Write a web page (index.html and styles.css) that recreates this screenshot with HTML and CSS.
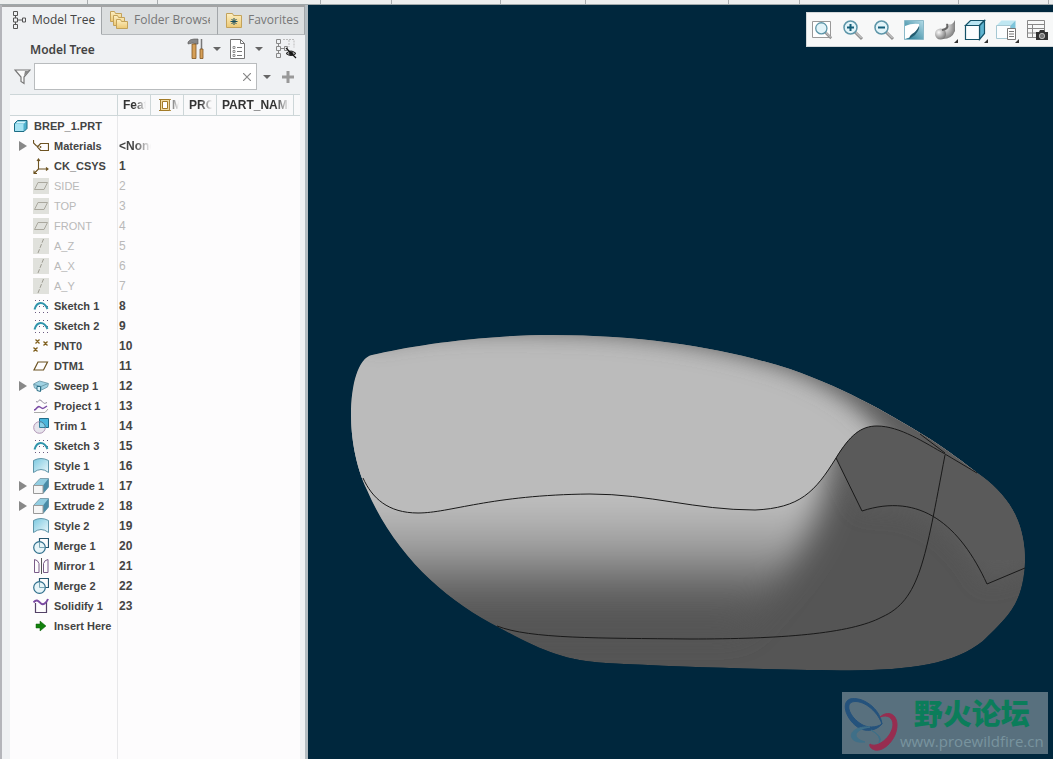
FILE: index.html
```
<!DOCTYPE html>
<html lang="en">
<head>
    <meta charset="UTF-8">
    <meta name="viewport" content="width=device-width, initial-scale=1.0">
    <title>BREP_1.PRT</title>
    <link rel="stylesheet" href="styles.css">
</head>
<body>
    <!-- Shared icon shapes -->
    <svg class="defs" aria-hidden="true">
        <defs>
            <linearGradient id="blue" x1="0" y1="0" x2="1" y2="1">
                <stop offset="0" stop-color="#7cc9e0"/>
                <stop offset="1" stop-color="#eaf7fb"/>
            </linearGradient>
            <linearGradient id="folder" x1="0" y1="0" x2="0" y2="1">
                <stop offset="0" stop-color="#fdf0c4"/>
                <stop offset="1" stop-color="#ecc873"/>
            </linearGradient>
            <linearGradient id="teal" x1="0" y1="1" x2="1" y2="0">
                <stop offset="0" stop-color="#1e7791"/>
                <stop offset="1" stop-color="#b5dce8"/>
            </linearGradient>
            <radialGradient id="ball" cx="0.35" cy="0.35" r="0.7">
                <stop offset="0" stop-color="#fafafa"/>
                <stop offset="1" stop-color="#777"/>
            </radialGradient>
        </defs>
        <symbol id="i-part" viewBox="0 0 16 16">
            <path d="M1.500 5.500l3-3h9.500v8l-3 3H1.500z" fill="#4fb0cc" stroke="#1d6c84"/>
            <path d="M2 6h8.500v7H2z" fill="#a5e3f3"/>
            <path d="M2.500 5.500l2-2H13l-2 2z" fill="#d6f4fb"/>
        </symbol>
        <symbol id="i-material" viewBox="0 0 16 16">
            <path d="M.5 2v3l3 3h2M4.500 9l3-3.500h8v7h-8z" fill="none" stroke="#6d5322" stroke-width="1.200"/>
            <circle cx="7.500" cy="9" r="0.900" fill="#6d5322"/>
        </symbol>
        <symbol id="i-csys" viewBox="0 0 16 16">
            <path d="M5.500 1v10H15M5.500 11L1 15.500M4 3l1.500-2L7 3M13 9.500l2 1.500-2 1.500M1 12.500v3h3" fill="none" stroke="#6d5322" stroke-width="1.100"/>
        </symbol>
        <symbol id="i-plane-off" viewBox="0 0 16 16">
            <path d="M0 0h16v16H0z" fill="#e0e1dc"/>
            <path d="M5 4.500h9.500l-3.500 7H1.500z" fill="none" stroke="#aaa89e"/>
        </symbol>
        <symbol id="i-axis-off" viewBox="0 0 16 16">
            <path d="M0 0h16v16H0z" fill="#e0e1dc"/>
            <path d="M10.500 1L5 15" fill="none" stroke="#9e9c92" stroke-dasharray="4 1.500"/>
        </symbol>
        <symbol id="i-sketch" viewBox="0 0 16 16">
            <path d="M2 2.500h14M2 8.500h14M2 14.500h14" stroke="#6a5a80" stroke-dasharray="1 3"/>
            <path d="M1.500 11.500C4 3 11 3 14.500 11" fill="none" stroke="#2e93ab" stroke-width="2"/>
        </symbol>
        <symbol id="i-point" viewBox="0 0 16 16">
            <path d="M2.500 1.500l4 4m0-4l-4 4M10.500 3.500l4 4m0-4l-4 4M.5 9.500l4 4m0-4l-4 4" stroke="#80601f" stroke-width="1.300"/>
        </symbol>
        <symbol id="i-plane" viewBox="0 0 16 16">
            <path d="M5 4h9.500l-4 8H1z" fill="none" stroke="#6d5322" stroke-width="1.200"/>
        </symbol>
        <symbol id="i-sweep" viewBox="0 0 16 16">
            <path d="M0.500 6l6-3 9 2.500-1 3.500-6 3-7-2z" fill="#9fd2e3" stroke="#7ba5b4"/>
            <path d="M1 6.500l7 2 7-3M8 8.500V12" fill="none" stroke="#6f9dad"/>
            <path d="M4 8.500h3.500v5l-3.500-1z" fill="#d9f1f8" stroke="#2b6f87"/>
        </symbol>
        <symbol id="i-project" viewBox="0 0 16 16">
            <path d="M3 3.500c3 2 2-3 5-1s2 4 6 2" fill="none" stroke="#8d8797"/>
            <path d="M1 14.500h11l3-3.500" fill="none" stroke="#aaa"/>
            <path d="M1 12c3 0 3-5 6-3s3 2 7-1" fill="none" stroke="#7a4ca5" stroke-width="1.500"/>
        </symbol>
        <symbol id="i-trim" viewBox="0 0 16 16">
            <path d="M6.500.5h9v9h-9z" fill="#4ab6dc" stroke="#1f6d8a"/>
            <circle cx="6.500" cy="9.500" r="5.800" fill="#e6e4ec" stroke="#b096b6"/>
            <path d="M6.500 9.500V3.700a5.800 5.800 0 0 1 5.800 5.800z" fill="#88d0e8" stroke="#367f9b"/>
        </symbol>
        <symbol id="i-style" viewBox="0 0 16 16">
            <path d="M.5 2.500q7.500-4 15 0v12q-7.500-6-15 0z" fill="url(#blue)" stroke="#5f95a9"/>
        </symbol>
        <symbol id="i-extrude" viewBox="0 0 16 16">
            <path d="M.5 7.500L7 .5h8.500V9L10 15.500z" fill="#92cde1" stroke="#7fa1ae"/>
            <path d="M10 7.500l5.500-7V9L10 15.500z" fill="#4a8ca7"/>
            <path d="M.5 7.500H10v8H.5z" fill="#f5f5f5" stroke="#999"/>
        </symbol>
        <symbol id="i-merge" viewBox="0 0 16 16">
            <path d="M6.500 3.500v-3h9v9h-3" fill="none" stroke="#26566f" stroke-width="1.200"/>
            <circle cx="6.500" cy="9.500" r="5.800" fill="#e7f4f8" stroke="#2f6f8c" stroke-width="1.200"/>
            <path d="M6.500 4v5.500H12" fill="none" stroke="#79a5b5"/>
        </symbol>
        <symbol id="i-mirror" viewBox="0 0 16 16">
            <path d="M1.500 1.500v13H6v-9q-1-3.500-4.500-4zM15 1.500v13h-4.500v-9q1-3.500 4.500-4z" fill="none" stroke="#795b88"/>
            <path d="M8.500 0v16" stroke="#555"/>
        </symbol>
        <symbol id="i-solidify" viewBox="0 0 16 16">
            <path d="M2.500 5v9.500h11V4" fill="none" stroke="#544267" stroke-width="1.200"/>
            <path d="M.5 4.500C4 0 6 4 8 5.500S13 6 15 1" fill="none" stroke="#7b4aa2" stroke-width="2"/>
        </symbol>
        <symbol id="i-insert" viewBox="0 0 16 16">
            <path d="M3 6h4V3l6 5-6 5v-3H3z" fill="#12810d" stroke="#0c5d0a" stroke-width="0.500"/>
        </symbol>
        <symbol id="i-lens" viewBox="0 0 22 22">
            <path d="M13 13l7 7" stroke="#949494" stroke-width="3"/>
            <path d="M13 12.500l6.500 6.500" stroke="#ddd"/>
            <circle cx="8.500" cy="8.500" r="6.500" fill="#e2f4f9" stroke="#5c95a8" stroke-width="1.500"/>
        </symbol>
    </svg>

    <!-- Bottom edge of the ribbon groups -->
    <div class="ribbon">
        <span></span><span></span><span></span><span></span><span></span>
        <span></span><span></span><span></span><span></span><span></span><span></span>
    </div>

    <div class="workspace">
        <aside class="navigator">
            <nav class="tabs">
                <button class="tab active" type="button">
                    <svg width="16" height="20" viewBox="0 0 16 20" fill="none" stroke="#555"><path d="M2.500 1.500h4v4h-4zM2.500 8h4v4h-4zM2.500 14.500h4v4h-4zM11.500 8h3v4h-3zM4.500 5.500V8m0 4v2.500M6.500 10h5"/></svg>
                    <span>Model Tree</span>
                </button>
                <button class="tab browser" type="button">
                    <svg width="20" height="20" viewBox="0 0 20 20" fill="url(#folder)" stroke="#c3a25a"><path d="M1.500 1.500h4l1 2h6v8h-11z"/><path d="M4.500 5.500h4l1 2h6v8h-11z"/><path d="M7.500 9.500h4l1 2h6v7h-11z"/></svg>
                    <span>Folder Browser</span>
                </button>
                <button class="tab" type="button">
                    <svg width="18" height="18" viewBox="0 0 18 18"><path d="M1.500 2.500h6l1 2h8v12h-15z" fill="url(#folder)" stroke="#c3a25a"/><path d="M9 7v7M5.500 10.500h7M6.500 8l5 5m0-5l-5 5" stroke="#174c5c"/></svg>
                    <span>Favorites</span>
                </button>
            </nav>

            <div class="panel">
                <div class="panel-head">
                    <h1>Model Tree</h1>
                    <button class="icon" type="button" aria-label="Settings">
                        <svg width="18" height="22" viewBox="0 0 18 22"><path d="M1 4q2-3 6-3h4v5H8L6 5 1 6z" fill="#888" stroke="#555" stroke-width="0.600"/><path d="M5 6h4v14.500H5z" fill="#d6a058" stroke="#805623" stroke-width="0.800"/><path d="M14.500 1v10" stroke="#777" stroke-width="1.500"/><path d="M13 11h3v9.500h-3z" fill="#d6a058" stroke="#805623" stroke-width="0.800"/></svg>
                    </button>
                    <button class="arrow" type="button" aria-label="Settings menu"></button>
                    <button class="icon" type="button" aria-label="Show">
                        <svg width="18" height="20" viewBox="0 0 18 20" fill="none" stroke="#777"><path d="M1.500.5h10l4 4v15h-14z" fill="#fff"/><path d="M11.500.5v4h4M8 8.500h5M8 12.500h5M8 16.500h5"/><path d="M4 7.500h2v2H4zM4 11.500h2v2H4zM4 15.500h2v2H4z" stroke-width="0.800"/></svg>
                    </button>
                    <button class="arrow" type="button" aria-label="Show menu"></button>
                    <button class="icon last" type="button" aria-label="Hide items">
                        <svg width="22" height="20" viewBox="0 0 22 20" fill="none"><path d="M1.500.5h4v4h-4zM1.500 7.500h4v4h-4zM1.500 14.500h4v4h-4zM3.500 4.500v3m0 4v3M5.500 9.500h4m0-2h3v4h-3z" stroke="#888"/><path d="M8 .5h11v8M14 1v7" stroke="#bbb" stroke-dasharray="2 1"/><path d="M11 14.500q5-5 10 0-5 4-10 0z" fill="#999" stroke="#222"/><circle cx="16" cy="14.500" r="2" fill="#222"/><path d="M11 9l10 10" stroke="#111" stroke-width="1.300"/></svg>
                    </button>
                </div>

                <div class="filter">
                    <svg width="17" height="16" viewBox="0 0 17 16"><path d="M1 1h15l-6 7v6.500l-3-2V8z" fill="#fafafa" stroke="#777" stroke-width="1.200"/><path d="M11 2h4l-5 5z" fill="#888"/></svg>
                    <div class="filter-box">
                        <input type="text" aria-label="Filter">
                        <button type="button" aria-label="Clear"><svg width="8" height="8" viewBox="0 0 8 8"><path d="M0 0l8 8m0-8l-8 8" stroke="#888" stroke-width="1.200"/></svg></button>
                    </div>
                    <button class="arrow" type="button" aria-label="Filter menu"></button>
                    <button class="icon plus" type="button" aria-label="Add filter"><svg width="12" height="12" viewBox="0 0 12 12"><path d="M6 0v12M0 6h12" stroke="#999" stroke-width="3"/></svg></button>
                </div>

                <table class="tree">
                    <colgroup>
                        <col class="c-name"><col class="c-col"><col class="c-col"><col class="c-col"><col class="c-part"><col>
                    </colgroup>
                    <thead>
                        <tr>
                            <th></th>
                            <th><span>Feat #</span></th>
                            <th class="with-icon"><span><svg width="14" height="14" viewBox="0 0 14 14" fill="none" stroke="#a27b28"><path d="M2.500 1.500h9v11h-9z" fill="#f2dca2"/><path d="M4.500 3.500h5v7h-5z" fill="#fff"/><path d="M1 1.500h2M11 1.500h2M1 12.500h2M11 12.500h2"/></svg>MP</span></th>
                            <th><span>PRO</span></th>
                            <th><span>PART_NAME</span></th>
                            <th></th>
                        </tr>
                    </thead>
                    <tbody id="tree"></tbody>
                </table>
            </div>
        </aside>

        <main class="graphics">
            <svg class="model" viewBox="308 5 745 754" preserveAspectRatio="xMinYMin meet" role="img" aria-label="Model">
                <defs>
                    <path id="body" d="M372 355C410 346 480 335 552 335C650 335 730 350 790 369C850 390 896 418 930 439C950 452 963 462 976 472C1008 494 1025 520 1025 562C1023 605 1008 616 983 641C955 664 910 670 850 670.500C780 670 680 667 606 663C565 661 540 650 500 628C445 600 395 555 367 490C355 465 351 435 351 415C351 385 358 358 372 355z"/>
                    <path id="shell" d="M363 478C372 498 388 513 418 513C450 513 490 495 590 494C650 494 695 510 755 510C800 508 815 492 836 458C850 435 861 426 877 426C900 426 925 443 945 454L977 473L1000 300H330V478z"/>
                    <clipPath id="bodyClip"><use href="#body"/></clipPath>
                    <clipPath id="shellClip"><use href="#shell"/></clipPath>
                    <filter id="soft" x="-20%" y="-60%" width="140%" height="220%"><feGaussianBlur stdDeviation="16"/></filter>
                    <filter id="edge" x="-20%" y="-60%" width="140%" height="220%"><feGaussianBlur stdDeviation="11"/></filter>
                    <linearGradient id="belly" gradientUnits="userSpaceOnUse" x1="0" y1="490" x2="0" y2="620">
                        <stop offset="0" stop-color="#c2c2c2"/>
                        <stop offset="0.250" stop-color="#b0b0b0"/>
                        <stop offset="0.450" stop-color="#9c9c9c"/>
                        <stop offset="0.600" stop-color="#808080"/>
                        <stop offset="0.750" stop-color="#676767"/>
                        <stop offset="0.900" stop-color="#585858"/>
                        <stop offset="1" stop-color="#555"/>
                    </linearGradient>
                </defs>
                <g clip-path="url(#bodyClip)">
                    <use href="#body" fill="#555"/>
                    <path d="M960 420L1030 470V570L985 583Q940 500 862 510L836 458 880 420z" fill="#5b5b5b" filter="url(#edge)"/>
                    <path d="M290 420H838L822 500Q805 560 740 630H290z" fill="url(#belly)" filter="url(#soft)"/>
                    <path d="M836 458L862 511Q935 495 970 560L1030 560V400H850z" fill="#5a5a5a"/>
                    <g clip-path="url(#shellClip)">
                        <use href="#shell" fill="#bbb"/>
                        <path d="M360 325L372 343Q450 327 552 332C650 333 730 349 790 370Q840 390 868 418L910 465 1000 500V290H360z" fill="#5c5c5c" filter="url(#edge)"/>
                    </g>
                </g>
                <g class="edges">
                    <path d="M363 478C372 498 388 513 418 513C450 513 490 495 590 494C650 494 695 510 755 510C800 508 815 492 836 458C850 435 861 426 877 426C900 426 925 443 945 454L977 473"/>
                    <path d="M497 626C530 639 600 638 690 639C780 639 850 634 882 617C920 600 925 560 945 455"/>
                    <path d="M836 458L862 511C920 492 960 525 987 584L1025 568"/>
                    <path d="M920 434L945 453"/>
                </g>
            </svg>

            <div class="toolbar">
                <button type="button" aria-label="Refit"><svg width="22" height="22" viewBox="0 0 22 22"><path d="M1.500 2.500h18v16h-18z" fill="#fff" stroke="#999"/><use href="#i-lens" x="3" y="2" width="19" height="19"/></svg></button>
                <button type="button" aria-label="Zoom in"><svg width="22" height="22"><use href="#i-lens"/><path d="M8.500 5v7M5 8.500h7" stroke="#145f7a" stroke-width="2"/></svg></button>
                <button type="button" aria-label="Zoom out"><svg width="22" height="22"><use href="#i-lens"/><path d="M5 8.500h7" stroke="#145f7a" stroke-width="2"/></svg></button>
                <button type="button" aria-label="Repaint"><svg width="22" height="22" viewBox="0 0 22 22"><path d="M1.500 1.500h19v19h-19z" fill="url(#teal)" stroke="#8ab9c8"/><path d="M2 7q7-3 14-2 1 3-3 7L8 18l-6 2z" fill="#fff"/><path d="M16 7q1 3-4 9l-6 4q0-3 3-5 5-3 7-8z" fill="#245c70"/></svg></button>
                <button class="menu" type="button" aria-label="Rendering"><svg width="22" height="22" viewBox="0 0 22 22"><path d="M12 4Q18 8 21 1v11q-3 8-12 8l-3-9q6 0 6-7z" fill="url(#ball)"/><circle cx="6.500" cy="15" r="5.500" fill="url(#ball)"/><path d="M13 5q2 5-5 6" fill="none" stroke="#666" stroke-width="2"/></svg></button>
                <button class="menu" type="button" aria-label="Display style"><svg width="22" height="22" viewBox="0 0 22 22" stroke="#145268" stroke-width="1.200"><path d="M1.500 6.500l5-5h14l-5 5z" fill="#b8e4f1"/><path d="M15.500 6.500l5-5v13l-5 6z" fill="#5fb4d0"/><path d="M1.500 6.500h14v14h-14z" fill="#fbfdfe"/></svg></button>
                <button class="menu" type="button" aria-label="Saved views"><svg width="22" height="22" viewBox="0 0 22 22"><path d="M1.500 6.500l5-5h14l-5 5z" fill="#bfe7f2"/><path d="M15.500 6.500l5-5v13l-5 4z" fill="#7dc4da"/><path d="M1.500 6.500h14v13h-14z" fill="#fbfdfe" stroke="#a6c8d3"/><path d="M12.500 9.500h8v11h-8z" fill="#fff" stroke="#777"/><path d="M14 12.500h5M14 15h5M14 17.500h5" stroke="#777"/></svg></button>
                <button type="button" aria-label="View manager"><svg width="22" height="22" viewBox="0 0 22 22"><path d="M1.500 1.500h17v17h-17zM1.500 5.500h17M1.500 9.500h17M1.500 14h17M6.500 5.500v13" fill="none" stroke="#888"/><path d="M10 13h3l1-2h4l1 2h3v8H10z" fill="#333"/><circle cx="16" cy="17" r="2.700" fill="#777" stroke="#ddd" stroke-width="0.700"/></svg></button>
            </div>

            <div class="watermark">
                <svg width="58" height="58" viewBox="0 0 58 58" fill="none">
                    <path d="M40 30C38 14 20 2 8 5C-2 9 5 27 17 34C24 38 34 37 40 30C34 34 25 34 19 30C8 23 3 11 10 8C20 5 35 16 40 30z" fill="#24527c" stroke="#24527c"/>
                    <path d="M38 23C46 16 55 20 55 31C55 45 42 58 33 56C29 55 27 52 28 50C35 55 50 43 51 31C51 24 46 20 38 23z" fill="#972d50" stroke="#972d50"/>
                    <path d="M28 33C15 32 7 38 10 44Q12 49 23 48Q13 45 14 40Q16 35 28 33zM29 36Q42 43 37 49Q40 42 29 36z" fill="#3f6f88" stroke="#3f6f88"/>
                </svg>
                <div class="watermark-text">
                    <strong lang="zh">野火论坛</strong>
                    <span>www.proewildfire.cn</span>
                </div>
            </div>
        </main>
    </div>

    <script src="tree.js"></script>
</body>
</html>
```
FILE: styles.css
```
* {
    box-sizing: border-box;
    margin: 0;
    padding: 0;
}

body {
    display: flex;
    flex-direction: column;
    height: 100vh;
    overflow: hidden;
    background-color: #00273d;
    font-family: "Liberation Sans", Arial, sans-serif;
    font-size: 11px;
    color: #444;
}

button {
    border: 0;
    background: none;
    font: inherit;
    color: inherit;
}

svg {
    display: block;
    flex: none;
}

.defs {
    position: absolute;
    width: 0;
    height: 0;
}

/* Ribbon edge */
.ribbon {
    display: grid;
    grid-template-columns: 88fr 70fr 163fr 71fr 109fr 85fr 143fr 71fr 159fr 90fr 4fr;
    flex: none;
    height: 5px;
    background-color: #eceeee;
    border-bottom: 1px solid #a0a8aa;
}

.ribbon span {
    border-right: 1px solid #a9adaf;
}

.ribbon span:last-child {
    border-right: 0;
}

.workspace {
    display: flex;
    flex: 1;
    min-height: 0;
}

/* Navigator */
.navigator {
    display: flex;
    flex-direction: column;
    flex: none;
    width: 308px;
    background-color: #eff1f3;
    border-left: 2px solid #b4b5ba;
    border-right: 3px solid #b4bdc2;
}

.tabs {
    display: flex;
    height: 30px;
    border-top: 2px solid #a2a3a4;
    font-family: "Open Sans", "Noto Sans", sans-serif;
    font-size: 12px;
}

.tab {
    display: flex;
    align-items: center;
    gap: 5px;
    width: 87px;
    padding: 0 7px 2px;
    background-color: #dbdedf;
    border-right: 1px solid #a2a6a9;
    border-bottom: 1px solid #b4b8bb;
    color: #777;
    white-space: nowrap;
    overflow: hidden;
}

.tab.browser {
    width: 116px;
}

.tab.browser span {
    overflow: hidden;
}

.tab.active {
    width: 100px;
    padding-left: 9px;
    background-color: #eff1f3;
    border-bottom-color: #eff1f3;
    color: #444;
}

.panel {
    display: flex;
    flex-direction: column;
    flex: 1;
    padding: 0 5px 0 8px;
}

.panel-head {
    display: flex;
    align-items: center;
    height: 28px;
    padding-left: 20px;
}

.panel-head h1 {
    flex: 1;
    font-family: "Noto Sans", "Open Sans", sans-serif;
    font-size: 12px;
    font-weight: 600;
}

.icon {
    display: flex;
    align-items: center;
    justify-content: center;
    width: 22px;
}

.icon.last {
    margin: 0 3px 0 6px;
}

.arrow {
    width: 20px;
    height: 16px;
}

.arrow::before {
    content: "";
    display: block;
    width: 0;
    margin: 0 auto;
    border: 4px solid transparent;
    border-top-color: #666;
    border-bottom: 0;
}

.filter {
    display: flex;
    align-items: center;
    height: 27px;
    padding-left: 4px;
}

.filter-box {
    display: flex;
    align-items: center;
    flex: 1;
    height: 27px;
    margin-left: 3px;
    padding-right: 5px;
    background-color: #fff;
    border: 1px solid #b9bcbe;
}

.filter-box input {
    flex: 1;
    min-width: 0;
    height: 24px;
    padding: 0 4px;
    border: 0;
    outline: 0;
    font: inherit;
}

.icon.plus {
    margin-right: 1px;
}

/* Tree table */
.tree {
    width: 100%;
    margin-top: 4px;
    border-collapse: separate;
    border-spacing: 0;
    table-layout: fixed;
    background-color: #fdfcfd;
}

.panel::after {
    content: "";
    flex: 1;
    background: linear-gradient(90deg, #fdfcfd 107px, #e8e8ea 107px, #e8e8ea 108px, #fdfcfd 108px);
}

.c-name {
    width: 108px;
}

.c-col {
    width: 33px;
}

.c-part {
    width: 77px;
}

.tree th {
    height: 22px;
    padding-left: 5px;
    border-top: 1px solid #cdd6d8;
    border-bottom: 1px solid #cdd6d8;
    border-right: 1px solid #cdd6d8;
    background-color: #f9f9fa;
    color: #333;
    font-size: 12px;
    text-align: left;
}

.tree th:last-child {
    border-right: 0;
}

.tree th span,
.value {
    display: flex;
    overflow: hidden;
    white-space: nowrap;
    -webkit-mask-image: linear-gradient(90deg, #000 50%, transparent);
    mask-image: linear-gradient(90deg, #000 50%, transparent);
}

.tree th:nth-child(5) span {
    -webkit-mask-image: linear-gradient(90deg, #000 80%, transparent);
    mask-image: linear-gradient(90deg, #000 80%, transparent);
}

.tree th span {
    margin-right: 4px;
}

.tree th.with-icon {
    padding-left: 7px;
}

.tree td {
    height: 20px;
    font-weight: bold;
    white-space: nowrap;
}

.tree td:first-child {
    border-right: 1px solid #e8e8ea;
}

.node {
    display: flex;
    align-items: center;
    gap: 5px;
    padding-left: 8px;
    font-size: 11px;
}

.node .toggle {
    width: 10px;
    height: 10px;
}

.node .toggle.open::before {
    content: "";
    display: block;
    width: 0;
    margin-left: 1px;
    border: 5px solid transparent;
    border-left: 8px solid #888;
    border-right: 0;
}

.node.root {
    padding-left: 3px;
}

.value {
    padding-left: 1px;
    font-size: 12px;
}

.value.number {
    -webkit-mask-image: none;
    mask-image: none;
}

.suppressed td {
    color: #b9b9b9;
    font-weight: normal;
}

/* Graphics area */
.graphics {
    position: relative;
    flex: 1;
    min-width: 0;
    overflow: hidden;
}

.model {
    width: 100%;
}

.edges {
    fill: none;
    stroke: #191919;
    stroke-width: 1;
}

.toolbar {
    position: absolute;
    top: 7px;
    right: 0;
    display: flex;
    align-items: center;
    justify-content: space-around;
    width: 247px;
    height: 35px;
    padding-right: 1px;
    background-color: #f7f8f8;
    border: 1px solid #d4d8da;
    border-right: 0;
}

.toolbar button {
    position: relative;
}

.toolbar .menu::after {
    content: "";
    position: absolute;
    right: -2px;
    bottom: -2px;
    border-left: 4px solid transparent;
    border-bottom: 4px solid #333;
}

.watermark {
    position: absolute;
    right: 5px;
    bottom: 5px;
    display: flex;
    align-items: center;
    width: 206px;
    height: 62px;
    padding-right: 5px;
    background-color: #58707e;
}

.watermark-text {
    display: flex;
    flex-direction: column;
    align-items: center;
    flex: 1;
    color: #78949e;
    font-family: "Open Sans", "Noto Sans", sans-serif;
    font-size: 15px;
    line-height: 22px;
}

.watermark-text strong {
    color: #0b7d5a;
    font-family: "Noto Sans CJK SC", sans-serif;
    font-size: 29px;
    font-weight: 900;
    line-height: 36px;
}
```
FILE: tree.js
```
const items = [
    { name: 'BREP_1.PRT', icon: 'part', root: true },
    { name: 'Materials', icon: 'material', value: '<None>', open: true },
    { name: 'CK_CSYS', icon: 'csys', value: 1 },
    { name: 'SIDE', icon: 'plane-off', value: 2, off: true },
    { name: 'TOP', icon: 'plane-off', value: 3, off: true },
    { name: 'FRONT', icon: 'plane-off', value: 4, off: true },
    { name: 'A_Z', icon: 'axis-off', value: 5, off: true },
    { name: 'A_X', icon: 'axis-off', value: 6, off: true },
    { name: 'A_Y', icon: 'axis-off', value: 7, off: true },
    { name: 'Sketch 1', icon: 'sketch', value: 8 },
    { name: 'Sketch 2', icon: 'sketch', value: 9 },
    { name: 'PNT0', icon: 'point', value: 10 },
    { name: 'DTM1', icon: 'plane', value: 11 },
    { name: 'Sweep 1', icon: 'sweep', value: 12, open: true },
    { name: 'Project 1', icon: 'project', value: 13 },
    { name: 'Trim 1', icon: 'trim', value: 14 },
    { name: 'Sketch 3', icon: 'sketch', value: 15 },
    { name: 'Style 1', icon: 'style', value: 16 },
    { name: 'Extrude 1', icon: 'extrude', value: 17, open: true },
    { name: 'Extrude 2', icon: 'extrude', value: 18, open: true },
    { name: 'Style 2', icon: 'style', value: 19 },
    { name: 'Merge 1', icon: 'merge', value: 20 },
    { name: 'Mirror 1', icon: 'mirror', value: 21 },
    { name: 'Merge 2', icon: 'merge', value: 22 },
    { name: 'Solidify 1', icon: 'solidify', value: 23 },
    { name: 'Insert Here', icon: 'insert' }
];

const tree = document.getElementById('tree');

// Build one table row per feature
items.forEach(item => {
    const row = tree.insertRow();
    if (item.off) row.classList.add('suppressed');

    const toggle = item.root ? '' : `<span class="toggle${item.open ? ' open' : ''}"></span>`;
    row.insertCell().innerHTML = `
        <div class="node${item.root ? ' root' : ''}">
            ${toggle}<svg width="16" height="16"><use href="#i-${item.icon}"/></svg>
            <span>${item.name}</span>
        </div>`;

    const value = document.createElement('div');
    value.className = typeof item.value === 'number' ? 'value number' : 'value';
    value.textContent = item.value || '';
    row.insertCell().appendChild(value);

    for (let i = 0; i < 4; i++) row.insertCell();
});
```
